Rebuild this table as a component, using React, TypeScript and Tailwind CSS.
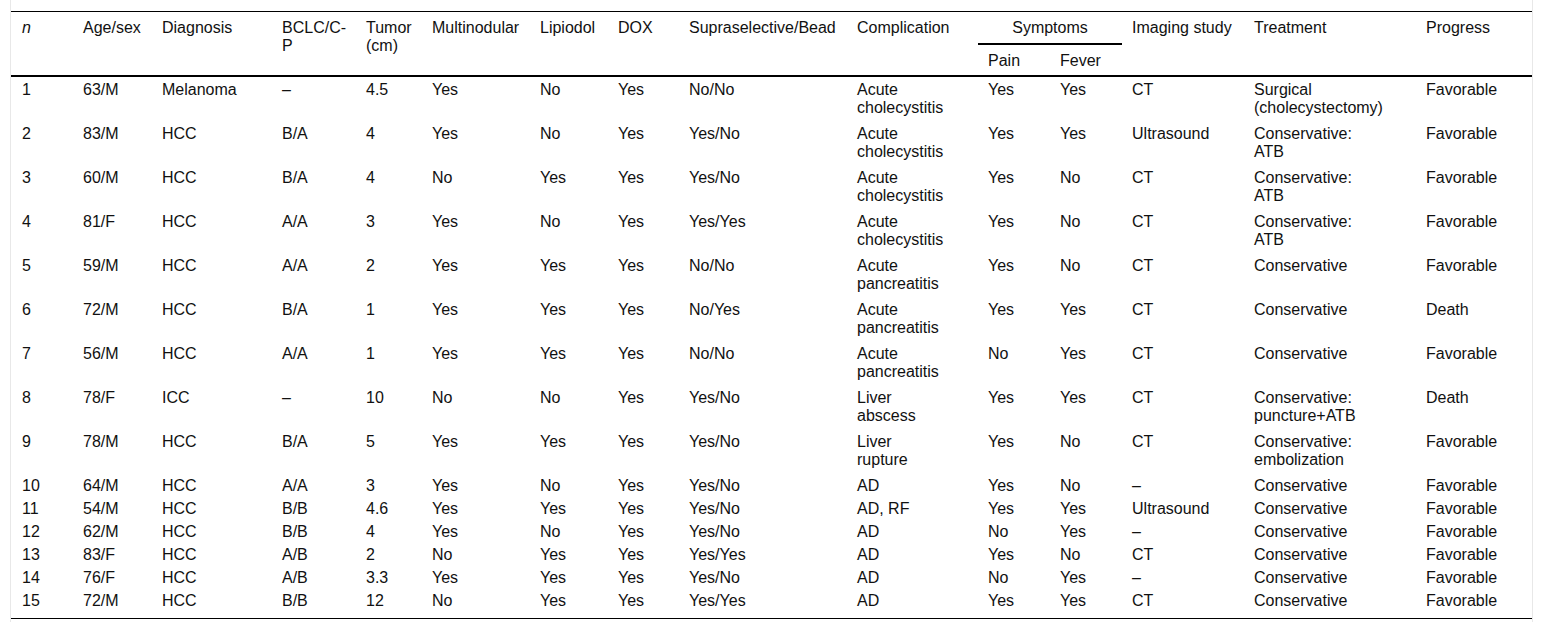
const rows: string[][] = [
  ['1', '63/M', 'Melanoma', '–', '4.5', 'Yes', 'No', 'Yes', 'No/No', 'Acute\ncholecystitis', 'Yes', 'Yes', 'CT', 'Surgical\n(cholecystectomy)', 'Favorable'],
  ['2', '83/M', 'HCC', 'B/A', '4', 'Yes', 'No', 'Yes', 'Yes/No', 'Acute\ncholecystitis', 'Yes', 'Yes', 'Ultrasound', 'Conservative:\nATB', 'Favorable'],
  ['3', '60/M', 'HCC', 'B/A', '4', 'No', 'Yes', 'Yes', 'Yes/No', 'Acute\ncholecystitis', 'Yes', 'No', 'CT', 'Conservative:\nATB', 'Favorable'],
  ['4', '81/F', 'HCC', 'A/A', '3', 'Yes', 'No', 'Yes', 'Yes/Yes', 'Acute\ncholecystitis', 'Yes', 'No', 'CT', 'Conservative:\nATB', 'Favorable'],
  ['5', '59/M', 'HCC', 'A/A', '2', 'Yes', 'Yes', 'Yes', 'No/No', 'Acute\npancreatitis', 'Yes', 'No', 'CT', 'Conservative', 'Favorable'],
  ['6', '72/M', 'HCC', 'B/A', '1', 'Yes', 'Yes', 'Yes', 'No/Yes', 'Acute\npancreatitis', 'Yes', 'Yes', 'CT', 'Conservative', 'Death'],
  ['7', '56/M', 'HCC', 'A/A', '1', 'Yes', 'Yes', 'Yes', 'No/No', 'Acute\npancreatitis', 'No', 'Yes', 'CT', 'Conservative', 'Favorable'],
  ['8', '78/F', 'ICC', '–', '10', 'No', 'No', 'Yes', 'Yes/No', 'Liver\nabscess', 'Yes', 'Yes', 'CT', 'Conservative:\npuncture+ATB', 'Death'],
  ['9', '78/M', 'HCC', 'B/A', '5', 'Yes', 'Yes', 'Yes', 'Yes/No', 'Liver\nrupture', 'Yes', 'No', 'CT', 'Conservative:\nembolization', 'Favorable'],
  ['10', '64/M', 'HCC', 'A/A', '3', 'Yes', 'No', 'Yes', 'Yes/No', 'AD', 'Yes', 'No', '–', 'Conservative', 'Favorable'],
  ['11', '54/M', 'HCC', 'B/B', '4.6', 'Yes', 'Yes', 'Yes', 'Yes/No', 'AD, RF', 'Yes', 'Yes', 'Ultrasound', 'Conservative', 'Favorable'],
  ['12', '62/M', 'HCC', 'B/B', '4', 'Yes', 'No', 'Yes', 'Yes/No', 'AD', 'No', 'Yes', '–', 'Conservative', 'Favorable'],
  ['13', '83/F', 'HCC', 'A/B', '2', 'No', 'Yes', 'Yes', 'Yes/Yes', 'AD', 'Yes', 'No', 'CT', 'Conservative', 'Favorable'],
  ['14', '76/F', 'HCC', 'A/B', '3.3', 'Yes', 'Yes', 'Yes', 'Yes/No', 'AD', 'No', 'Yes', '–', 'Conservative', 'Favorable'],
  ['15', '72/M', 'HCC', 'B/B', '12', 'No', 'Yes', 'Yes', 'Yes/Yes', 'AD', 'Yes', 'Yes', 'CT', 'Conservative', 'Favorable'],
]

const widths = [62, 79, 120, 84, 66, 108, 78, 71, 168, 131, 72, 72, 122, 172, 116]

function rowClass(i: number) {
  if (i === 0) return 'h-[45px]'
  if (i < 9) return 'h-[44px]'
  if (i === rows.length - 1) return 'h-[31px] border-b border-black'
  return 'h-[23px]'
}

export default function App() {
  return (
    <div className="bg-white px-[10px] font-['Liberation_Sans',Arial,sans-serif] text-[16px] leading-[18px] text-[#111]">
      <div className="border-x border-[#e8e8e8] pt-[11px] pb-[3px]">
        <table className="w-full table-fixed border-collapse border-t border-black text-left">
          <colgroup>
            {widths.map((w, i) => (
              <col key={i} style={{ width: w }} />
            ))}
          </colgroup>
          <thead>
            <tr className="h-[32px]">
              <th rowSpan={2} className="border-b-2 border-black px-[11px] pt-[7px] align-top font-normal italic">n</th>
              <th rowSpan={2} className="border-b-2 border-black px-[10px] pt-[7px] align-top font-normal">Age/sex</th>
              <th rowSpan={2} className="border-b-2 border-black px-[10px] pt-[7px] align-top font-normal">Diagnosis</th>
              <th rowSpan={2} className="border-b-2 border-black px-[10px] pt-[7px] align-top font-normal">
                BCLC/C-
                <br />P
              </th>
              <th rowSpan={2} className="border-b-2 border-black px-[10px] pt-[7px] align-top font-normal">
                Tumor
                <br />
                (cm)
              </th>
              <th rowSpan={2} className="border-b-2 border-black px-[10px] pt-[7px] align-top font-normal">Multinodular</th>
              <th rowSpan={2} className="border-b-2 border-black px-[10px] pt-[7px] align-top font-normal">Lipiodol</th>
              <th rowSpan={2} className="border-b-2 border-black px-[10px] pt-[7px] align-top font-normal">DOX</th>
              <th rowSpan={2} className="border-b-2 border-black px-[10px] pt-[7px] align-top font-normal whitespace-nowrap">Supraselective/Bead</th>
              <th rowSpan={2} className="border-b-2 border-black px-[10px] pt-[7px] align-top font-normal">Complication</th>
              <th colSpan={2} className="border-b-2 border-black px-[10px] pt-[7px] align-top text-center font-normal">
                Symptoms
              </th>
              <th rowSpan={2} className="border-b-2 border-black px-[10px] pt-[7px] align-top font-normal whitespace-nowrap">Imaging study</th>
              <th rowSpan={2} className="border-b-2 border-black px-[10px] pt-[7px] align-top font-normal">Treatment</th>
              <th rowSpan={2} className="border-b-2 border-black px-[10px] pt-[7px] align-top font-normal">Progress</th>
            </tr>
            <tr className="h-[32px]">
              <th className="border-b-2 border-black px-[10px] pt-[7px] align-top font-normal">Pain</th>
              <th className="border-b-2 border-black px-[10px] pt-[7px] align-top font-normal">Fever</th>
            </tr>
          </thead>
          <tbody>
            {rows.map((r, ri) => (
              <tr key={ri} className={rowClass(ri)}>
                {r.map((c, ci) => (
                  <td
                    key={ci}
                    className={`whitespace-pre align-top pt-[4px] ${ci === 0 ? 'px-[11px]' : 'px-[10px]'}`}
                  >
                    {c}
                  </td>
                ))}
              </tr>
            ))}
          </tbody>
        </table>
      </div>
    </div>
  )
}
